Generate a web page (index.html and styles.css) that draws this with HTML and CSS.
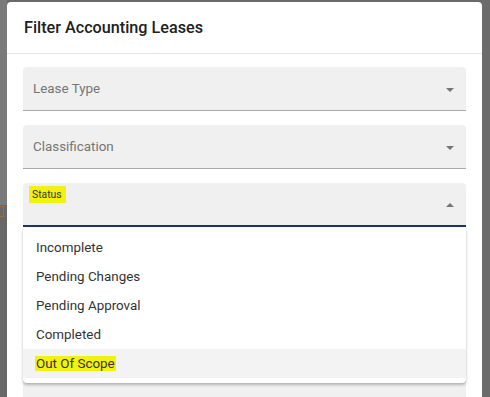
FILE: index.html
```html
<!DOCTYPE html>
<html>
<head>
    <meta charset="UTF-8">
    <title>Filter Accounting Leases</title>
    <link rel="stylesheet" href="styles.css">
</head>
<body>
    <div class="backdrop">
        <span class="bg-mark"></span>
    </div>
    <div class="dialog">
        <div class="dialog-header">
            <h2>Filter Accounting Leases</h2>
        </div>
        <div class="dialog-body">
            <div class="field">
                <span class="placeholder">Lease Type</span>
                <span class="arrow down"></span>
            </div>
            <div class="field">
                <span class="placeholder">Classification</span>
                <span class="arrow down"></span>
            </div>
            <div class="select-wrap">
                <div class="field open">
                    <span class="float-label"><mark>Status</mark></span>
                    <span class="arrow up"></span>
                </div>
                <ul class="menu">
                    <li>Incomplete</li>
                    <li>Pending Changes</li>
                    <li>Pending Approval</li>
                    <li>Completed</li>
                    <li class="active"><mark>Out Of Scope</mark></li>
                </ul>
            </div>
            <!-- fields hidden behind the open menu -->
            <div class="field"></div>
            <div class="field"></div>
            <div class="field"></div>
        </div>
    </div>
</body>
</html>
```

FILE: styles.css
```css
html, body {
    margin: 0;
    height: 100%;
    overflow: hidden;
}
body {
    font-family: Roboto, "Liberation Sans", sans-serif;
    background: #6b6b6b;
    position: relative;
}
.backdrop {
    position: absolute;
    left: 0;
    top: 0;
    width: 7px;
    height: 100%;
    background: linear-gradient(#7a7a7a 0, #7a7a7a 205px, #686868 205px);
}
.bg-mark {
    position: absolute;
    left: 0;
    top: 206px;
    width: 3px;
    height: 9px;
    border: 1px solid #b5651d;
    border-left: none;
}
.dialog {
    position: relative;
    margin: 2px 0 0 7px;
    width: 475px;
    height: 420px;
    background: #fff;
    border-radius: 4px 4px 0 0;
}
.dialog-header {
    height: 51px;
    border-bottom: 1px solid #e3e3e3;
    padding: 0 17px;
    display: flex;
    align-items: center;
}
h2 {
    margin: 0;
    font-size: 16.2px;
    font-weight: 500;
    color: #212121;
}
.dialog-body {
    padding: 13px 16px 0;
    display: flex;
    flex-direction: column;
    gap: 14px;
}
.field {
    position: relative;
    height: 43px;
    background: #f0f0f0;
    border-bottom: 1px solid #a8a8a8;
    border-radius: 4px 4px 0 0;
    display: flex;
    align-items: center;
    padding: 0 10px;
}
.placeholder {
    font-size: 13.4px;
    color: #757575;
}
.arrow {
    position: absolute;
    right: 12px;
    top: 21px;
    width: 0;
    height: 0;
    border-left: 4px solid transparent;
    border-right: 4px solid transparent;
}
.arrow.down {
    border-top: 4px solid #757575;
}
.arrow.up {
    top: 20px;
    border-bottom: 4px solid #757575;
}
.select-wrap {
    position: relative;
}
.field.open {
    height: 42px;
    border-bottom: 2px solid #1e3264;
    align-items: flex-start;
}
.float-label {
    font-size: 10.4px;
    color: #333;
    margin-top: 5px;
}
mark {
    background: #f4f012;
    color: inherit;
    padding: 0 1px;
    margin: 0 -1px;
}
.float-label mark {
    padding: 2px 4px 2px 3px;
    margin: 0 -4px;
}
.menu {
    position: absolute;
    z-index: 2;
    left: 0;
    right: 0;
    top: 45px;
    margin: 0;
    padding: 5px 0;
    list-style: none;
    background: #fff;
    border-radius: 0 0 4px 4px;
    box-shadow: 0 2px 3px rgba(0,0,0,0.25), 0 0 1px rgba(0,0,0,0.12);
}
.menu li {
    height: 29px;
    line-height: 29px;
    padding: 0 13px;
    font-size: 13.4px;
    color: #333;
}
.menu li.active {
    background: #f3f3f3;
}
```
